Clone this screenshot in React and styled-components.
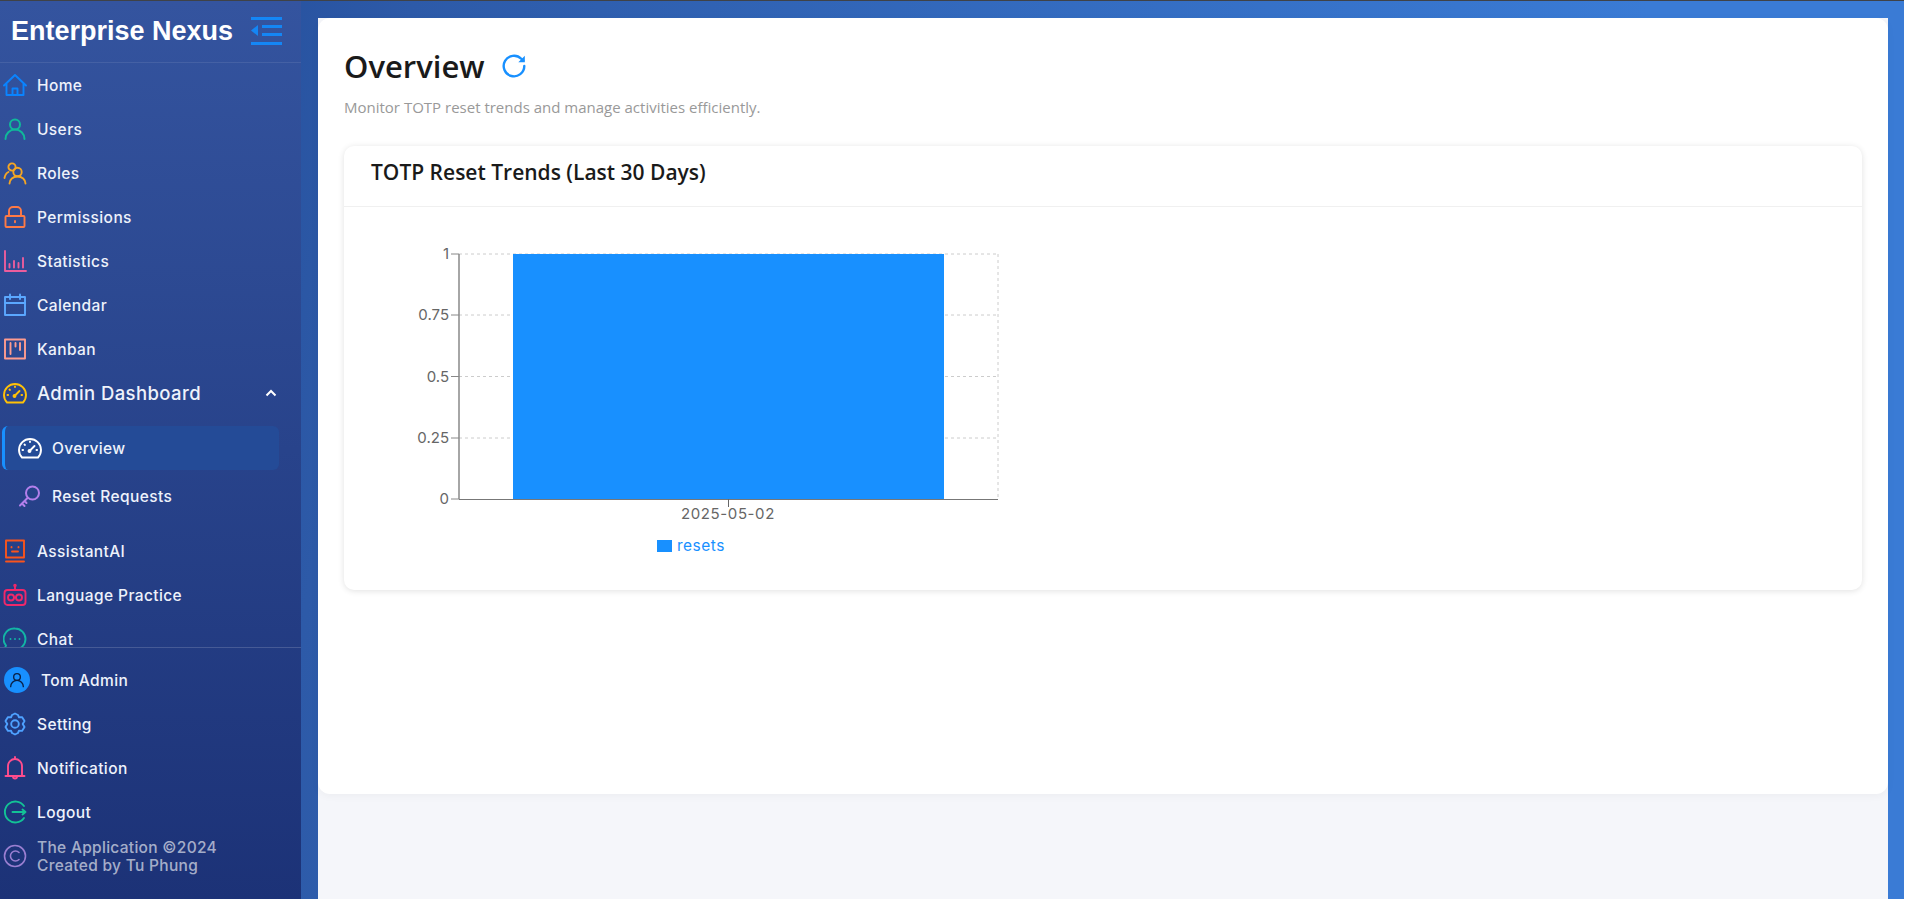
import React from 'react';
import styled, { createGlobalStyle } from 'styled-components';

const GlobalStyle = createGlobalStyle`
  html, body {
    margin: 0;
    padding: 0;
    height: 100%;
    background: #fff;
    overflow: hidden;
  }
  * { box-sizing: border-box; }
`;

const Shell = styled.div`
  display: flex;
  width: 1904px;
  height: 100vh;
  border-top: 1px solid #3f4247;
  background: linear-gradient(100deg, #1e4490 0%, #2d5aa8 20%, #3a7bd5 80%, #3a7bd5 100%);
`;

const Sidebar = styled.aside`
  display: flex;
  flex-direction: column;
  flex: 0 0 301px;
  min-width: 0;
  height: 100%;
  background: linear-gradient(180deg, #34549f 0%, #1c3277 100%);
  font-family: Inter, "Liberation Sans", sans-serif;
  color: #eef2fb;
`;

const Brand = styled.div`
  display: flex;
  align-items: center;
  flex: 0 0 62px;
  padding: 0 0 1px 11px;
  gap: 18px;
  border-bottom: 1px solid rgba(255, 255, 255, 0.09);
`;

const BrandName = styled.div`
  font-family: "Liberation Sans", Arial, sans-serif;
  font-weight: 700;
  font-size: 27px;
  line-height: 1;
  color: #fff;
  white-space: nowrap;
`;

const Menu = styled.nav`
  flex: 1;
  min-height: 0;
  overflow: hidden;
`;

const Row = styled.div`
  display: flex;
  align-items: center;
  height: 44px;
  padding-left: 3px;
  gap: 10px;
  font-size: ${(p) => p.$size || 15.5}px;
  font-weight: 500;
  letter-spacing: 0.4px;
  white-space: nowrap;
`;

const Chevron = styled.svg`
  margin-left: auto;
  margin-right: 24px;
  width: 12px;
  height: 12px;
`;

const SubMenu = styled.div`
  padding: 11px 0 11px 2px;
  display: flex;
  flex-direction: column;
  gap: 4px;
`;

const SubRow = styled.div`
  display: flex;
  align-items: center;
  width: 277px;
  height: 44px;
  padding-left: ${(p) => (p.$active ? 13 : 16)}px;
  gap: 10px;
  border-radius: 6px;
  border-left: ${(p) => (p.$active ? '3px solid #1890ff' : 'none')};
  background: ${(p) => (p.$active ? '#244b97' : 'transparent')};
  font-size: 15.5px;
  font-weight: 500;
  letter-spacing: 0.4px;
`;

const Bottom = styled.div`
  flex: none;
  padding: 10px 0 21px;
  border-top: 1px solid rgba(255, 255, 255, 0.16);
`;

const Avatar = styled.span`
  display: flex;
  align-items: center;
  justify-content: center;
  width: 26px;
  height: 26px;
  margin: 0 1px;
  border-radius: 50%;
  background: #1890ff;
`;

const Credit = styled.div`
  margin-top: 2px;
  font-size: 15.5px;
  line-height: 18px;
  letter-spacing: 0.3px;
  color: rgba(255, 255, 255, 0.62);
`;

const Main = styled.main`
  flex: 1;
  min-width: 0;
  padding: 17px 16px 0 17px;
`;

const Surface = styled.div`
  height: 100%;
  background: #f5f6fa;
`;

const Content = styled.div`
  height: 776px;
  padding: 24px 26px 0;
  background: #fff;
  border-radius: 12px;
  box-shadow: 0 2px 8px rgba(0, 0, 0, 0.04);
  font-family: "Open Sans", "Liberation Sans", sans-serif;
`;

const TitleRow = styled.div`
  display: flex;
  align-items: center;
  gap: 16px;
  height: 48px;
`;

const Title = styled.h1`
  margin: 0;
  font-size: 31px;
  font-weight: 600;
  color: #1a1a1a;
`;

const Subtitle = styled.p`
  margin: 7px 0 0;
  font-size: 15px;
  line-height: 20px;
  color: #999;
`;

const Card = styled.section`
  margin-top: 29px;
  height: 444px;
  background: #fff;
  border-radius: 10px;
  box-shadow: 0 1px 6px rgba(0, 0, 0, 0.12);
`;

const CardHead = styled.div`
  display: flex;
  align-items: center;
  height: 61px;
  padding: 0 27px 8px;
  border-bottom: 1px solid #f0f0f0;
  font-size: 21px;
  font-weight: 600;
  color: #1a1a1a;
`;

const CardBody = styled.div`
  padding: 32px 56px;
`;

const ChartText = styled.text`
  font-family: Inter, "Liberation Sans", sans-serif;
  font-size: ${(p) => p.$size || 15}px;
  letter-spacing: ${(p) => p.$spacing || 0}px;
  fill: ${(p) => p.$fill || '#666'};
`;

const Icon = ({ color, size = 24, width = 1.9, children }) => (
  <svg width={size} height={size} viewBox="0 0 24 24" fill="none" stroke={color} strokeWidth={width} strokeLinecap="round" strokeLinejoin="round" style={{ flex: 'none' }}>
    {children}
  </svg>
);

const GaugeIcon = ({ color }) => (
  <Icon color={color} width={1.9}>
    <path d="M4 21.5h16a11 11 0 1 0-16 0z" />
    <path d="M11.5 15l5-5" />
    <circle cx="11.5" cy="15" r="1" />
    <path d="M12 5.5v.6M6.5 8.5l.5.4M4.5 14h.6M18.5 14h.6" />
  </Icon>
);

const icons = {
  home: (
    <Icon color="#0a84ff">
      <path d="M1 12.5 12 2l11 10.5M3.5 10.5V22h17V10.5" />
      <path d="M9.5 22v-6.5h5V22" />
    </Icon>
  ),
  users: (
    <Icon color="#10b99a" width={2}>
      <circle cx="12" cy="7.5" r="5" />
      <path d="M2.5 22a9.5 9.5 0 0 1 19 0" />
    </Icon>
  ),
  roles: (
    <Icon color="#f5a623">
      <circle cx="9" cy="6" r="3.6" />
      <path d="M1.5 17c.5-3 1.8-5 4-6" />
      <circle cx="14.5" cy="11" r="4.2" />
      <path d="M6.5 22.5c0-4 3.5-7 8-7s8 3 8 7" />
    </Icon>
  ),
  permissions: (
    <Icon color="#ff7a45">
      <rect x="2.5" y="11" width="19" height="11" rx="1" />
      <path d="M6 11V6a4 4 0 0 1 4-4h4a4 4 0 0 1 4 4v5" />
      <path d="M12 16v1.2" />
    </Icon>
  ),
  statistics: (
    <Icon color="#eb5d9d">
      <path d="M2 2v20h21" />
      <path d="M6.5 15v3.5M11 12v6.5M15.5 14v4.5M20 9v9.5" />
    </Icon>
  ),
  calendar: (
    <Icon color="#5ba8ff">
      <rect x="2" y="4" width="20" height="18" />
      <path d="M2 10h20M7 1.5V6M17 1.5V6" />
    </Icon>
  ),
  kanban: (
    <Icon color="#ff9c8f">
      <rect x="2" y="2.5" width="20" height="19" />
      <path d="M7.5 6v11M12.5 6v3.5M17 6v7" />
    </Icon>
  ),
  assistant: (
    <Icon color="#fa541c">
      <rect x="3" y="1.5" width="18" height="17" />
      <path d="M3 22.5h18M9 12.5h6M8.5 8v.4M15.5 8v.4" />
    </Icon>
  ),
  language: (
    <Icon color="#f0286a">
      <rect x="1.5" y="7" width="21" height="15" rx="3" />
      <path d="M12 7V3" />
      <circle cx="12" cy="2.5" r=".8" />
      <circle cx="8" cy="14.5" r="3" />
      <circle cx="16" cy="14.5" r="3" />
      <path d="M11 14.5h2" />
    </Icon>
  ),
  chat: (
    <Icon color="#13b5a5">
      <path d="M12 1.5a10.5 10.5 0 1 1 0 21H6c-2 0-3-.5-4-1.5l1-2.500A10.5 10.5 0 0 1 12 1.5z" />
      <path d="M7.5 12v.1M12 12v.1M16.5 12v.1" />
    </Icon>
  ),
  setting: (
    <Icon color="#4ea1ff">
      <path d="M12 1.5l3 1.5 1 2.3 3-.2 2.500 4-1.800 2.900 1.800 2.900-2.500 4-3-.2-1 2.300-3 1.500-3-1.500-1-2.300-3 .2-2.500-4 1.800-2.900-1.800-2.900 2.500-4 3 .2 1-2.300z" />
      <circle cx="12" cy="12" r="3.8" />
    </Icon>
  ),
  notification: (
    <Icon color="#ff4d8d">
      <path d="M12 1v2M5 20V10a7 7 0 0 1 14 0v10M2.5 20h19M10 20.5c0 1.3.8 2 2 2s2-.7 2-2" />
    </Icon>
  ),
  logout: (
    <Icon color="#13c296">
      <path d="M21 6a10.5 10.5 0 1 0 0 12" />
      <path d="M9.5 12h13M19.5 9.5l3 2.5-3 2.5" />
    </Icon>
  ),
  copyright: (
    <Icon color="#9a7fd1" width={1.6}>
      <circle cx="12" cy="12" r="10.5" />
      <path d="M16 8.5a5 5 0 1 0 0 7" />
    </Icon>
  ),
};

const topItems = [
  ['Home', 'home'],
  ['Users', 'users'],
  ['Roles', 'roles'],
  ['Permissions', 'permissions'],
  ['Statistics', 'statistics'],
  ['Calendar', 'calendar'],
  ['Kanban', 'kanban'],
];

const lowerItems = [
  ['AssistantAI', 'assistant'],
  ['Language Practice', 'language'],
  ['Chat', 'chat'],
];

const bottomItems = [
  ['Setting', 'setting'],
  ['Notification', 'notification'],
  ['Logout', 'logout'],
];

const ticks = [
  { y: 15, label: '1' },
  { y: 76, label: '0.75' },
  { y: 137.5, label: '0.5' },
  { y: 199, label: '0.25' },
  { y: 260, label: '0' },
];

const TrendChart = () => (
  <svg width="660" height="320" viewBox="0 0 660 320">
    {ticks.slice(0, 4).map((t) => (
      <line key={t.y} x1="59" x2="598" y1={t.y} y2={t.y} stroke="#ccc" strokeDasharray="3 3" />
    ))}
    <line x1="598" x2="598" y1="15" y2="260" stroke="#ccc" strokeDasharray="3 3" />
    <rect x="113" y="15" width="431" height="245" fill="#1890ff" />
    <line x1="59" x2="59" y1="15" y2="260" stroke="#888" strokeWidth="1.5" />
    <line x1="59" x2="598" y1="260.5" y2="260.5" stroke="#777" strokeWidth="1.2" />
    {ticks.map((t) => (
      <g key={t.label}>
        <line x1="51" x2="59" y1={t.y} y2={t.y} stroke="#888" />
        <ChartText x="49" y={t.y + 5} textAnchor="end">{t.label}</ChartText>
      </g>
    ))}
    <line x1="328.5" x2="328.5" y1="260" y2="268" stroke="#666" />
    <ChartText x="328" y="280" textAnchor="middle" $spacing={0.6}>2025-05-02</ChartText>
    <rect x="257" y="301" width="15" height="12" fill="#1890ff" />
    <ChartText x="277" y="312" $fill="#1890ff" $size={15.5} $spacing={0.5}>resets</ChartText>
  </svg>
);

export default function App() {
  return (
    <>
      <GlobalStyle />
      <Shell>
        <Sidebar>
          <Brand>
            <BrandName>Enterprise Nexus</BrandName>
            <svg width="31" height="28" viewBox="0 0 31 28" fill="#1486f5">
              <rect x="0" y="0" width="31" height="3" />
              <rect x="11" y="8" width="20" height="3" />
              <rect x="11" y="16" width="20" height="3" />
              <rect x="0" y="25" width="31" height="3" />
              <path d="M0 13.5 7 8v11z" />
            </svg>
          </Brand>
          <Menu>
            {topItems.map(([label, key]) => (
              <Row key={key}>{icons[key]}{label}</Row>
            ))}
            <Row $size={18.5}>
              <GaugeIcon color="#ffc107" />
              Admin Dashboard
              <Chevron viewBox="0 0 12 12" fill="none" stroke="#fff" strokeWidth="2">
                <path d="M1.5 8.5 6 4l4.5 4.5" />
              </Chevron>
            </Row>
            <SubMenu>
              <SubRow $active>
                <GaugeIcon color="#fff" />
                Overview
              </SubRow>
              <SubRow>
                <Icon color="#b37feb" width={2}>
                  <circle cx="14.5" cy="9" r="6.5" />
                  <path d="M9.5 14 2 21.5M4 19.5l2.5 2.5M6.5 17l2 2" />
                </Icon>
                Reset Requests
              </SubRow>
            </SubMenu>
            {lowerItems.map(([label, key]) => (
              <Row key={key}>{icons[key]}{label}</Row>
            ))}
          </Menu>
          <Bottom>
            <Row>
              <Avatar>
                <Icon color="#0a1f44" size={16} width={2}>
                  <circle cx="12" cy="7.5" r="5" />
                  <path d="M2.5 22a9.5 9.5 0 0 1 19 0" />
                </Icon>
              </Avatar>
              Tom Admin
            </Row>
            {bottomItems.map(([label, key]) => (
              <Row key={key}>{icons[key]}{label}</Row>
            ))}
            <Row>
              {icons.copyright}
              <Credit>The Application ©2024<br />Created by Tu Phung</Credit>
            </Row>
          </Bottom>
        </Sidebar>
        <Main>
          <Surface>
            <Content>
              <TitleRow>
                <Title>Overview</Title>
                <Icon color="#1890ff" size={26} width={2.2}>
                  <path d="M21.5 12a9.5 9.5 0 1 1-2.8-6.700L20.5 7" />
                  <path d="M22 2.5V8.5h-6z" fill="#1890ff" stroke="none" />
                </Icon>
              </TitleRow>
              <Subtitle>Monitor TOTP reset trends and manage activities efficiently.</Subtitle>
              <Card>
                <CardHead>TOTP Reset Trends (Last 30 Days)</CardHead>
                <CardBody>
                  <TrendChart />
                </CardBody>
              </Card>
            </Content>
          </Surface>
        </Main>
      </Shell>
    </>
  );
}
